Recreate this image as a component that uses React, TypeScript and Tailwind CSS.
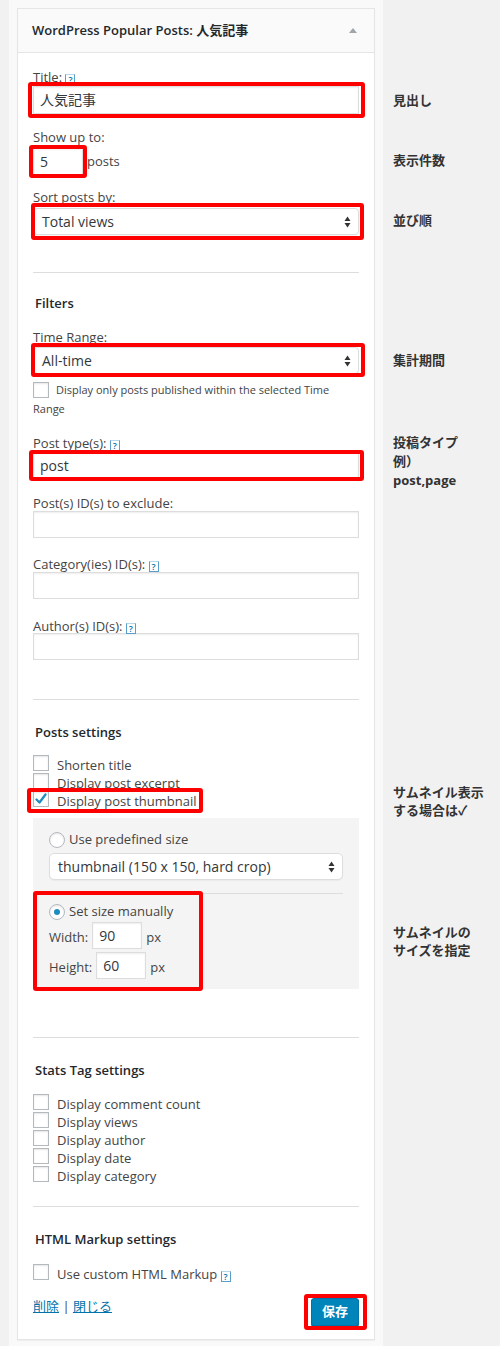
import type { ReactNode } from "react";

function Help() {
  return (
    <span className="inline-block h-[11px] w-[10px] border-x border-b border-t border-[#5a9fc9] border-t-[#b8d6e8] text-center align-[-1px] text-[9px] font-semibold leading-[10px] text-[#0073aa]">
      ?
    </span>
  );
}

function Label({ children, className = "" }: { children: ReactNode; className?: string }) {
  return <div className={`h-[18px] text-[13px] leading-[18px] text-[#444] ${className}`}>{children}</div>;
}

function Heading({ children, className = "" }: { children: ReactNode; className?: string }) {
  return <div className={`h-[18px] pl-[2px] text-[13px] font-semibold leading-[18px] text-[#23282d] ${className}`}>{children}</div>;
}

function Field({ value = "", className = "" }: { value?: string; className?: string }) {
  return (
    <div
      className={`h-[27px] border border-[#ddd] bg-white pl-[6px] text-[14px] leading-[25px] text-[#32373c] shadow-[inset_0_1px_2px_rgba(0,0,0,0.07)] ${className}`}
    >
      {value}
    </div>
  );
}

function Arrows() {
  return (
    <svg width="7" height="12" viewBox="0 0 7 12" className="absolute right-[7px] top-[7px]">
      <path d="M3.5 0.5 L6.5 5 L0.5 5 Z" fill="#333" />
      <path d="M0.5 7 L6.5 7 L3.5 11.5 Z" fill="#333" />
    </svg>
  );
}

function Select({ value, className = "" }: { value: string; className?: string }) {
  return (
    <div
      className={`relative h-[27px] rounded-[4px] border border-[#ddd] bg-white pl-[8px] text-[14px] leading-[25px] text-[#32373c] shadow-[0_1px_1px_rgba(0,0,0,0.04)] ${className}`}
    >
      {value}
      <Arrows />
    </div>
  );
}

function Box({ checked = false }: { checked?: boolean }) {
  return (
    <span className="relative inline-block size-4 shrink-0 border border-[#b4b9be] bg-white shadow-[inset_0_1px_2px_rgba(0,0,0,0.1)]">
      {checked && (
        <svg width="16" height="16" viewBox="0 0 16 16" className="absolute -left-[1px] -top-[1px]">
          <path d="M3.5 8.5 L6.5 11.5 L12.5 3.5" stroke="#1e8cbe" strokeWidth="2.3" fill="none" strokeLinecap="round" strokeLinejoin="round" />
        </svg>
      )}
    </span>
  );
}

function Radio({ checked = false }: { checked?: boolean }) {
  return (
    <span className="flex size-4 shrink-0 items-center justify-center rounded-full border border-[#b4b9be] bg-white shadow-[inset_0_1px_2px_rgba(0,0,0,0.1)]">
      {checked && <span className="size-[6px] rounded-full bg-[#1e8cbe]" />}
    </span>
  );
}

function CheckRow({ label, checked = false, children }: { label: string; checked?: boolean; children?: ReactNode }) {
  return (
    <div className="relative flex h-[18px] items-start">
      <Box checked={checked} />
      <span className="ml-2 text-[13px] leading-[20px] text-[#444]">{label}</span>
      {children}
    </div>
  );
}

function Divider({ className = "" }: { className?: string }) {
  return <div className={`h-px bg-[#ddd] ${className}`} />;
}

export default function App() {
  return (
    <div className="flex min-h-[1346px] w-[500px] bg-[#f1f1f1] font-['Open_Sans','Noto_Sans_CJK_JP',sans-serif]">
      <div className="ml-[9px] w-[374px] bg-[#f9f9f9] px-2 pt-2">
        <div className="border border-[#e5e5e5] bg-white shadow-[0_1px_1px_rgba(0,0,0,0.04)]">
          <div className="flex h-[44px] items-center justify-between border-b border-[#e5e5e5] bg-[#fafafa] pl-[14px] pr-[17px]">
            <span className="text-[13px] font-semibold text-[#23282d]">WordPress Popular Posts: 人気記事</span>
            <svg width="8" height="5" viewBox="0 0 8 5">
              <path d="M4 0 L8 5 L0 5 Z" fill="#a0a5aa" />
            </svg>
          </div>

          <div className="px-[15px] pb-[13px]">
            <Label className="mt-[15px]">
              Title: <Help />
            </Label>
            <div className="relative">
              <Field value="人気記事" className="h-[28px] leading-[26px]" />
              <span className="pointer-events-none absolute -bottom-[4px] -left-[5px] -right-[6px] -top-[4px] rounded-[3px] border-4 border-[#ff0000]" />
            </div>

            <Label className="mt-[14px]">Show up to:</Label>
            <div className="mt-[2px] flex items-center">
              <div className="relative">
                <Field value="5" className="w-[50px]" />
                <span className="pointer-events-none absolute -bottom-[3px] -left-[4px] -right-[4px] -top-[3px] rounded-[3px] border-4 border-[#ff0000]" />
              </div>
              <span className="ml-[4px] text-[13px] text-[#444]">posts</span>
            </div>

            <Label className="mt-[13px]">Sort posts by:</Label>
            <div className="relative mt-[2px]">
              <Select value="Total views" />
              <span className="pointer-events-none absolute -bottom-[5px] -left-[2px] -right-[5px] -top-[5px] rounded-[3px] border-4 border-[#ff0000]" />
            </div>

            <Divider className="mt-[37px]" />
            <Heading className="mt-[21px]">Filters</Heading>

            <Label className="mt-[16px]">Time Range:</Label>
            <div className="relative mt-[1px]">
              <Select value="All-time" />
              <span className="pointer-events-none absolute -bottom-[3px] -left-[2px] -right-[6px] -top-[4px] rounded-[3px] border-4 border-[#ff0000]" />
            </div>
            <p className="mt-[6px] text-[11px] leading-[19px] text-[#444]">
              <span className="mr-[7px] inline-block size-4 -translate-y-[1px] border border-[#b4b9be] bg-white align-middle shadow-[inset_0_1px_2px_rgba(0,0,0,0.1)]" />
              Display only posts published within the selected Time
              <br />
              Range
            </p>

            <Label className="mt-[16px]">
              Post type(s): <Help />
            </Label>
            <div className="relative">
              <Field value="post" />
              <span className="pointer-events-none absolute -bottom-[2px] -left-[4px] -right-[5px] -top-[2px] rounded-[3px] border-4 border-[#ff0000]" />
            </div>

            <Label className="mt-[15px]">Post(s) ID(s) to exclude:</Label>
            <Field className="-mt-[1px]" />

            <Label className="mt-[17px]">
              Category(ies) ID(s): <Help />
            </Label>
            <Field className="-mt-[1px]" />

            <Label className="mt-[18px]">
              Author(s) ID(s): <Help />
            </Label>
            <Field className="-mt-[2px]" />

            <Divider className="mt-[39px]" />
            <Heading className="mt-[23px]">Posts settings</Heading>

            <div className="mt-[14px]">
              <CheckRow label="Shorten title" />
              <CheckRow label="Display post excerpt" />
              <CheckRow label="Display post thumbnail" checked>
                <span className="pointer-events-none absolute -bottom-[4px] -left-[6px] -top-[3px] w-[176px] rounded-[3px] border-4 border-[#ff0000]" />
              </CheckRow>
            </div>

            <div className="mt-[9px] bg-[#f4f4f4] px-4 pb-[10px] pt-[13px]">
              <div className="flex h-[18px] items-center">
                <Radio />
                <span className="ml-[4px] text-[13px] text-[#444]">Use predefined size</span>
              </div>
              <Select value="thumbnail (150 x 150, hard crop)" className="mt-[4px] h-[26px] rounded-[5px] leading-[24px]" />
              <Divider className="mt-[13px]" />
              <div className="relative">
                <div className="mt-[9px] flex h-[18px] items-center">
                  <Radio checked />
                  <span className="ml-[4px] text-[13px] text-[#444]">Set size manually</span>
                </div>
                <div className="mt-[1px] flex items-center text-[13px] text-[#444]">
                  <span className="pt-[4px]">Width:</span>
                  <Field value="90" className="ml-[4px] w-[50px]" />
                  <span className="ml-[4px] pt-[4px]">px</span>
                </div>
                <div className="mt-[3px] flex items-center text-[13px] text-[#444]">
                  <span className="pt-[4px]">Height:</span>
                  <Field value="60" className="ml-[4px] w-[50px]" />
                  <span className="ml-[4px] pt-[4px]">px</span>
                </div>
                <span className="pointer-events-none absolute -bottom-[12px] -left-[16px] -top-[12px] w-[170px] rounded-[3px] border-4 border-[#ff0000]" />
              </div>
            </div>

            <Divider className="mt-[48px]" />
            <Heading className="mt-[23px]">Stats Tag settings</Heading>
            <div className="mt-[15px]">
              <CheckRow label="Display comment count" />
              <CheckRow label="Display views" />
              <CheckRow label="Display author" />
              <CheckRow label="Display date" />
              <CheckRow label="Display category" />
            </div>

            <Divider className="mt-[22px]" />
            <Heading className="mt-[23px]">HTML Markup settings</Heading>
            <div className="mt-[16px] flex h-[18px] items-start">
              <Box />
              <span className="ml-2 text-[13px] leading-[20px] text-[#444]">
                Use custom HTML Markup <Help />
              </span>
            </div>

            <div className="mt-[16px] flex items-start justify-between">
              <div className="-mt-[1px] text-[13px] leading-[18px] text-[#444]">
                <span className="text-[#0073aa] underline">削除</span> | <span className="text-[#0073aa] underline">閉じる</span>
              </div>
              <div className="relative">
                <div className="flex h-[28px] w-[48px] items-center justify-center rounded-[3px] border border-[#0073aa] bg-[#0085ba] text-[13px] font-bold text-white shadow-[0_1px_0_#006799]">
                  保存
                </div>
                <span className="pointer-events-none absolute -bottom-[4px] -left-[7px] -right-[8px] -top-[4px] rounded-[3px] border-4 border-[#ff0000]" />
              </div>
            </div>
          </div>
        </div>
      </div>

      <div className="flex flex-1 flex-col pl-[10px] text-[13px] font-bold leading-[18px] text-[#333]">
        <div className="mt-[91px]">見出し</div>
        <div className="mt-[42px]">表示件数</div>
        <div className="mt-[42px]">並び順</div>
        <div className="mt-[122px]">集計期間</div>
        <div className="mt-[64px] leading-[19px]">
          投稿タイプ
          <br />
          例）
          <br />
          post,page
        </div>
        <div className="mt-[293px]">
          サムネイル表示
          <br />
          する場合は✓
        </div>
        <div className="mt-[104px]">
          サムネイルの
          <br />
          サイズを指定
        </div>
      </div>
    </div>
  );
}
